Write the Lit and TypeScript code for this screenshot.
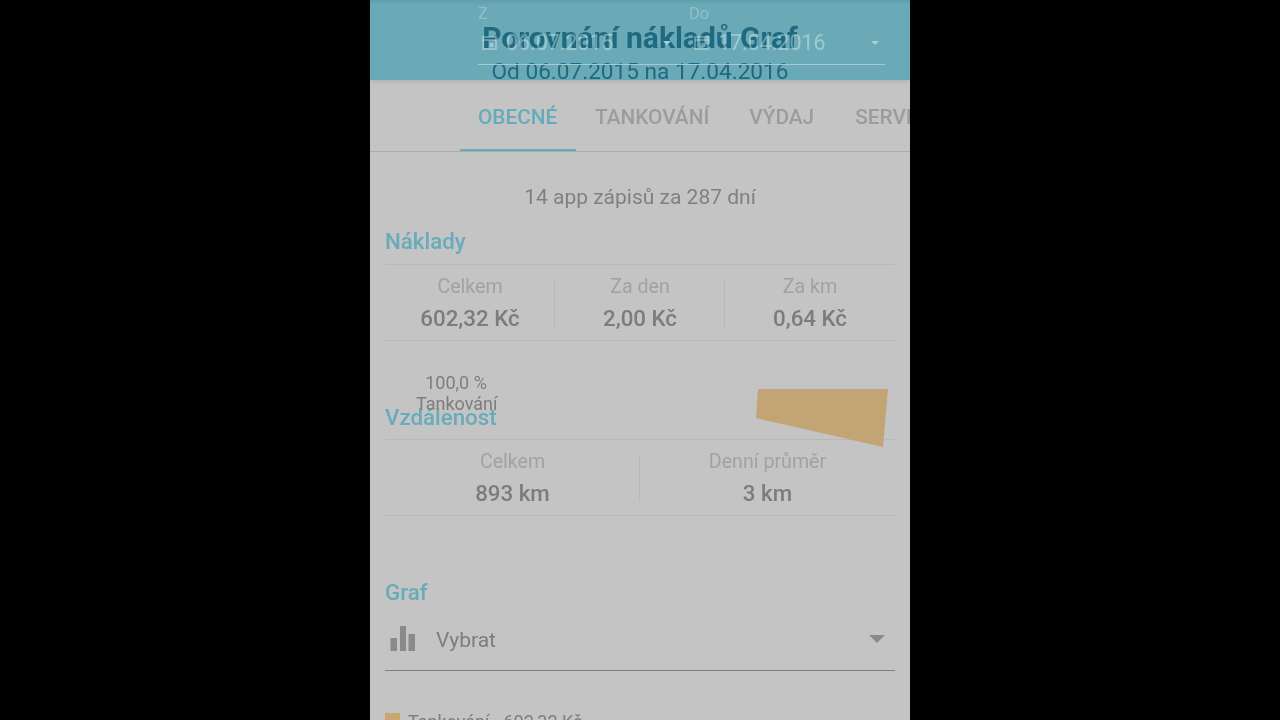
import { LitElement, html, css, svg } from "lit";
import { customElement } from "lit/decorators.js";

const calendar = html`<svg class="cal" viewBox="0 0 15 15" width="15" height="15"><rect x="1" y="2" width="13" height="12" fill="none" stroke="currentColor" stroke-width="1.6"/><path d="M1 5h13" stroke="currentColor" stroke-width="1.6"/><rect x="7.5" y="8" width="4" height="4" fill="currentColor"/></svg>`;

@customElement("app-root")
export class AppRoot extends LitElement {
  static styles = css`
    :host { display: flex; justify-content: center; width: 1280px; height: 720px; background: #000; overflow: hidden;
      font-family: Roboto, "Liberation Sans", sans-serif; }
    .phone { width: 540px; height: 720px; background: #c4c4c4; overflow: hidden; display: flex; flex-direction: column; position: relative; filter: blur(0.4px); }
    .header { flex: none; height: 80px; background: linear-gradient(#5f9fad 0, #6aaab7 5px); position: relative; box-sizing: border-box; padding: 4px 25px 0 108px; box-shadow: 0 2px 3px rgba(0, 0, 0, 0.08); }
    .labels { display: flex; font-size: 16.5px; line-height: 19px; color: #8fc0ca; }
    .labels span:first-child { width: 211px; }
    .dates { display: flex; align-items: center; height: 42px; padding-bottom: 2px; border-bottom: 1.5px solid #a3cbd3; color: rgba(255, 255, 255, 0.36); font-size: 21.4px; box-sizing: border-box; position: relative; z-index: 1; }
    .date { display: flex; align-items: center; box-sizing: border-box; gap: 9px; flex: none; }
    .date.one { width: 211px; padding-left: 4px; }
    .date.two { width: 196px; padding-left: 5px; }
    .cal { flex: none; }
    .caret { width: 0; height: 0; border: 4.5px solid transparent; border-top-color: #a9cfd6; border-bottom: 0; }
    .caret.first { margin-left: 41px; }
    .caret.last { margin-left: 37px; }
    .title { position: absolute; left: 0; right: 0; top: 20px; text-align: center; color: #1f6a80; }
    .title h1 { margin: 0; font-size: 30px; line-height: 36px; font-weight: 700; }
    .title p { margin: 0; font-size: 22.6px; line-height: 32px; font-weight: 400; }
    .tabs { flex: none; height: 72px; display: flex; box-sizing: border-box; border-bottom: 1px solid #adadad; padding-left: 90px; white-space: nowrap; overflow: hidden; font-size: 20.8px; font-weight: 500; color: #9c9c9c; }
    .tab { height: 72px; box-sizing: border-box; line-height: 26px; flex: none; padding-top: 24px; }
    .tab.active { color: #66abbb; width: 116px; padding-left: 18px; border-bottom: 3px solid #66abbb; margin-bottom: -1px; }
    .tab.second { padding-left: 19px; padding-right: 20px; }
    .tab.third { padding-left: 20px; padding-right: 20px; }
    .tab.fourth { padding-left: 21px; }
    .summary { text-align: center; font-size: 21px; line-height: 24px; color: #808080; margin-top: 33px; }
    section { margin: 0 15px; }
    h2 { margin: 0; font-size: 22.3px; font-weight: 500; line-height: 28px; color: #68abbb; border-bottom: 1px solid #b8b8b8; padding: 0 0 9px; }
    .costs { margin-top: 18px; }
    .stats { display: flex; border-bottom: 1px solid #b8b8b8; height: 76px; box-sizing: border-box; padding-top: 6px; }
    .stat { flex: 1; text-align: center; position: relative; }
    .stat + .stat::before { content: ""; position: absolute; left: -1px; top: 10px; height: 46px; border-left: 1px solid #b8b8b8; }
    .stat .k { font-size: 19.6px; line-height: 32px; color: #a2a2a2; }
    .stat .v { font-size: 22.3px; line-height: 30px; font-weight: 500; color: #7c7c7c; }
    .distance { margin-top: 62px; position: relative; }
    .distance h2 { padding-bottom: 8px; }
    .pie-label { position: absolute; left: 31px; top: -31px; width: 80px; text-align: center; font-size: 18px; line-height: 21px; color: #7d7d7d; white-space: nowrap; }
    .graph { margin-top: 62px; }
    .graph h3 { margin: 0; font-size: 22.3px; font-weight: 500; line-height: 28px; padding-bottom: 1px; color: #68abbb; }
    .select { display: flex; align-items: center; height: 64px; border-bottom: 1.5px solid #7e7e7e; box-sizing: border-box; padding: 0 10px 0 5px; font-size: 21px; color: #7d7d7d; }
    .select svg { flex: none; }
    .select span { flex: 1; margin-left: 21px; padding-top: 2px; }
    .arrow { flex: none; width: 0; height: 0; border: 8px solid transparent; border-top: 8px solid #8a8a8a; border-bottom: 0; }
    .legend { display: flex; align-items: flex-start; gap: 8px; margin-top: 41px; font-size: 18px; line-height: 20px; color: #7d7d7d; }
    .swatch { width: 15px; height: 15px; background: #c9a672; flex: none; margin-top: 1px; }
    .wedge { position: absolute; left: 0; top: 0; pointer-events: none; }
  `;

  render() {
    return html`<div class="phone">
      <header class="header">
        <div class="labels"><span>Z</span><span>Do</span></div>
        <div class="dates">
          <div class="date one">${calendar}<span>06.07.2015</span><i class="caret first"></i></div>
          <div class="date two">${calendar}<span>17.04.2016</span><i class="caret last"></i></div>
        </div>
        <div class="title"><h1>Porovnání nákladů Graf</h1><p>Od 06.07.2015 na 17.04.2016</p></div>
      </header>
      <nav class="tabs">
        <div class="tab active">OBECNÉ</div>
        <div class="tab second">TANKOVÁNÍ</div>
        <div class="tab third">VÝDAJ</div>
        <div class="tab fourth">SERVIS</div>
      </nav>
      <div class="summary">14 app zápisů za 287 dní</div>
      <section class="costs">
        <h2>Náklady</h2>
        <div class="stats">
          <div class="stat"><div class="k">Celkem</div><div class="v">602,32 Kč</div></div>
          <div class="stat"><div class="k">Za den</div><div class="v">2,00 Kč</div></div>
          <div class="stat"><div class="k">Za km</div><div class="v">0,64 Kč</div></div>
        </div>
      </section>
      <section class="distance">
        <div class="pie-label">100,0 %<br />Tankování</div>
        <h2>Vzdálenost</h2>
        <div class="stats">
          <div class="stat"><div class="k">Celkem</div><div class="v">893 km</div></div>
          <div class="stat"><div class="k">Denní průměr</div><div class="v">3 km</div></div>
        </div>
      </section>
      <section class="graph">
        <h3>Graf</h3>
        <div class="select">
          <svg viewBox="0 0 25 25" width="25" height="25"><path fill="#8a8a8a" d="M0.500 12h6.500v13H0.500zM10 0h6v25h-6zM18.500 8h6.500v17h-6.500z"/></svg>
          <span>Vybrat</span><i class="arrow"></i>
        </div>
        <div class="legend"><i class="swatch"></i><span>Tankování - 602,32 Kč</span></div>
      </section>
      <svg class="wedge" width="540" height="720" viewBox="0 0 540 720">${svg`<polygon points="388,389 518,389 513,447 386,418" fill="#c3a474"/>`}</svg>
    </div>`;
  }
}
